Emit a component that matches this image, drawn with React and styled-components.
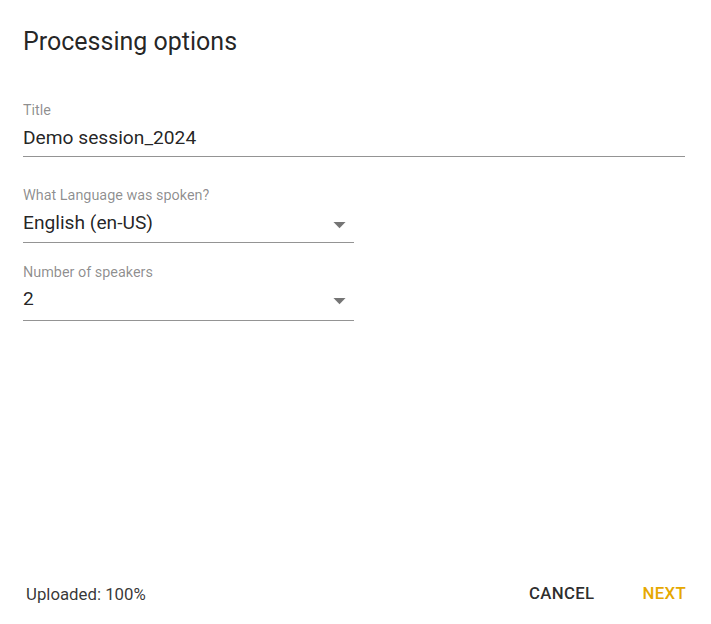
import React from "react";
import styled, { createGlobalStyle } from "styled-components";

const GlobalStyle = createGlobalStyle`
  html, body { margin: 0; padding: 0; background: #ffffff; }
  body { font-family: Roboto, "Liberation Sans", Arial, sans-serif; }
  * { box-sizing: border-box; }
`;

const Dialog = styled.div`
  width: 711px;
  height: 624px;
  display: flex;
  flex-direction: column;
  background: #ffffff;
`;

const Header = styled.h2`
  margin: 0;
  padding: 26px 26px 0 23px;
  font-size: 25px;
  line-height: 32px;
  font-weight: 400;
  color: rgba(0, 0, 0, 0.87);
`;

const Content = styled.div`
  flex: 1;
  display: flex;
  flex-direction: column;
  padding: 44px 26px 0 23px;
`;

const Field = styled.div`
  display: flex;
  flex-direction: column;
  width: ${(p) => (p.$half ? "331px" : "100%")};
  margin-bottom: ${(p) => p.$gap || 0}px;
`;

const Label = styled.label`
  font-size: 14.4px;
  line-height: 17px;
  color: rgba(0, 0, 0, 0.46);
`;

const ValueRow = styled.div`
  display: flex;
  align-items: flex-start;
  justify-content: space-between;
  margin-top: ${(p) => p.$mt}px;
  padding-bottom: ${(p) => p.$pb}px;
  border-bottom: 1px solid rgba(0, 0, 0, 0.42);
`;

const Value = styled.span`
  font-size: 19.2px;
  line-height: 23px;
  color: rgba(0, 0, 0, 0.87);
`;

const Arrow = styled.svg`
  width: 29px;
  height: 29px;
  margin-top: -1px;
  margin-bottom: -5px;
  fill: rgba(0, 0, 0, 0.54);
  flex: none;
`;

const Footer = styled.div`
  height: 60px;
  display: flex;
  align-items: center;
  justify-content: space-between;
  padding: 0 15px 0 26px;
`;

const Status = styled.span`
  font-size: 16.8px;
  color: rgba(0, 0, 0, 0.8);
`;

const Actions = styled.div`
  display: flex;
  align-items: center;
  gap: 28px;
`;

const Button = styled.button`
  border: none;
  background: transparent;
  padding: 8px 10px;
  font-family: inherit;
  font-size: 16.8px;
  font-weight: 500;
  text-transform: uppercase;
  letter-spacing: 0.02em;
  line-height: 1.75;
  color: ${(p) => (p.$primary ? "#e6a800" : "rgba(0, 0, 0, 0.84)")};
  cursor: pointer;
`;

const DropIcon = () => (
  <Arrow viewBox="0 0 24 24" aria-hidden="true">
    <path d="M7 10l5 5 5-5z" />
  </Arrow>
);

export default function App() {
  return (
    <>
      <GlobalStyle />
      <Dialog>
        <Header>Processing options</Header>
        <Content>
          <Field $gap={30}>
            <Label>Title</Label>
            <ValueRow $mt={7} $pb={7}>
              <Value>Demo session_2024</Value>
            </ValueRow>
          </Field>
          <Field $half $gap={21}>
            <Label>What Language was spoken?</Label>
            <ValueRow $mt={7} $pb={8}>
              <Value>English (en-US)</Value>
              <DropIcon />
            </ValueRow>
          </Field>
          <Field $half>
            <Label>Number of speakers</Label>
            <ValueRow $mt={6} $pb={10}>
              <Value>2</Value>
              <DropIcon />
            </ValueRow>
          </Field>
        </Content>
        <Footer>
          <Status>Uploaded: 100%</Status>
          <Actions>
            <Button>Cancel</Button>
            <Button $primary>Next</Button>
          </Actions>
        </Footer>
      </Dialog>
    </>
  );
}
